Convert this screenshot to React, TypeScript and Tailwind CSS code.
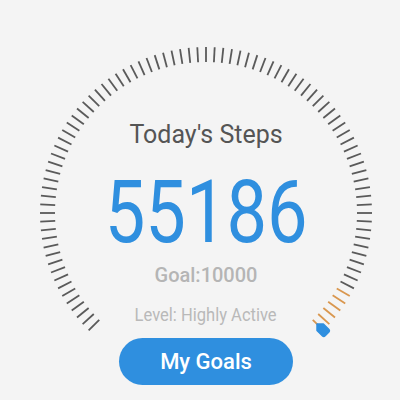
import React from 'react'

const CX = 206
const CY = 213

function Dial() {
  const ticks = []
  for (let i = 0; i <= 90; i++) {
    const a = -135 + i * 3
    const warm = a >= 120
    ticks.push(
      <line
        key={i}
        x1={0}
        y1={-151}
        x2={0}
        y2={-166}
        transform={`rotate(${a})`}
        stroke={warm ? '#d9974f' : '#5a5a5a'}
        strokeWidth={1.8}
      />
    )
  }
  return (
    <svg className="absolute inset-0" width={400} height={400} viewBox="0 0 400 400">
      <g transform={`translate(${CX} ${CY})`}>
        {ticks}
        <path
          transform="rotate(135)"
          d="M0 -157 L4.5 -161.5 L4.5 -169 Q4.5 -171 2.5 -171 L-2.5 -171 Q-4.5 -171 -4.5 -169 L-4.5 -161.5 Z"
          fill="#2f8fdf"
          stroke="#2f8fdf"
          strokeWidth={1.5}
          strokeLinejoin="round"
        />
      </g>
    </svg>
  )
}

export default function App() {
  return (
    <div
      className="relative w-[400px] h-[400px] overflow-hidden bg-[#f4f4f4]"
      style={{ fontFamily: 'Roboto, "Noto Sans", sans-serif' }}
    >
      <Dial />
      <div className="relative flex flex-col items-center pl-[12px] pt-[120px]">
        <h1 className="text-[25px] leading-[30px] font-normal text-[#555555]">Today's Steps</h1>
        <div className="mt-[19px] text-[87px] leading-[87px] text-[#2f8fdf] scale-x-[0.83]">55186</div>
        <div className="mt-[7px] text-[20px] leading-[24px] font-medium text-[#b5b5b5]">Goal:10000</div>
        <div className="mt-[16px] text-[19px] leading-[24px] text-[#b9b9b9] scale-x-[0.87]">
          Level: Highly Active
        </div>
        <button className="mt-[11px] w-[174px] h-[47px] rounded-full bg-[#2f8fdf] text-white text-[22px] font-medium">
          My Goals
        </button>
      </div>
    </div>
  )
}
